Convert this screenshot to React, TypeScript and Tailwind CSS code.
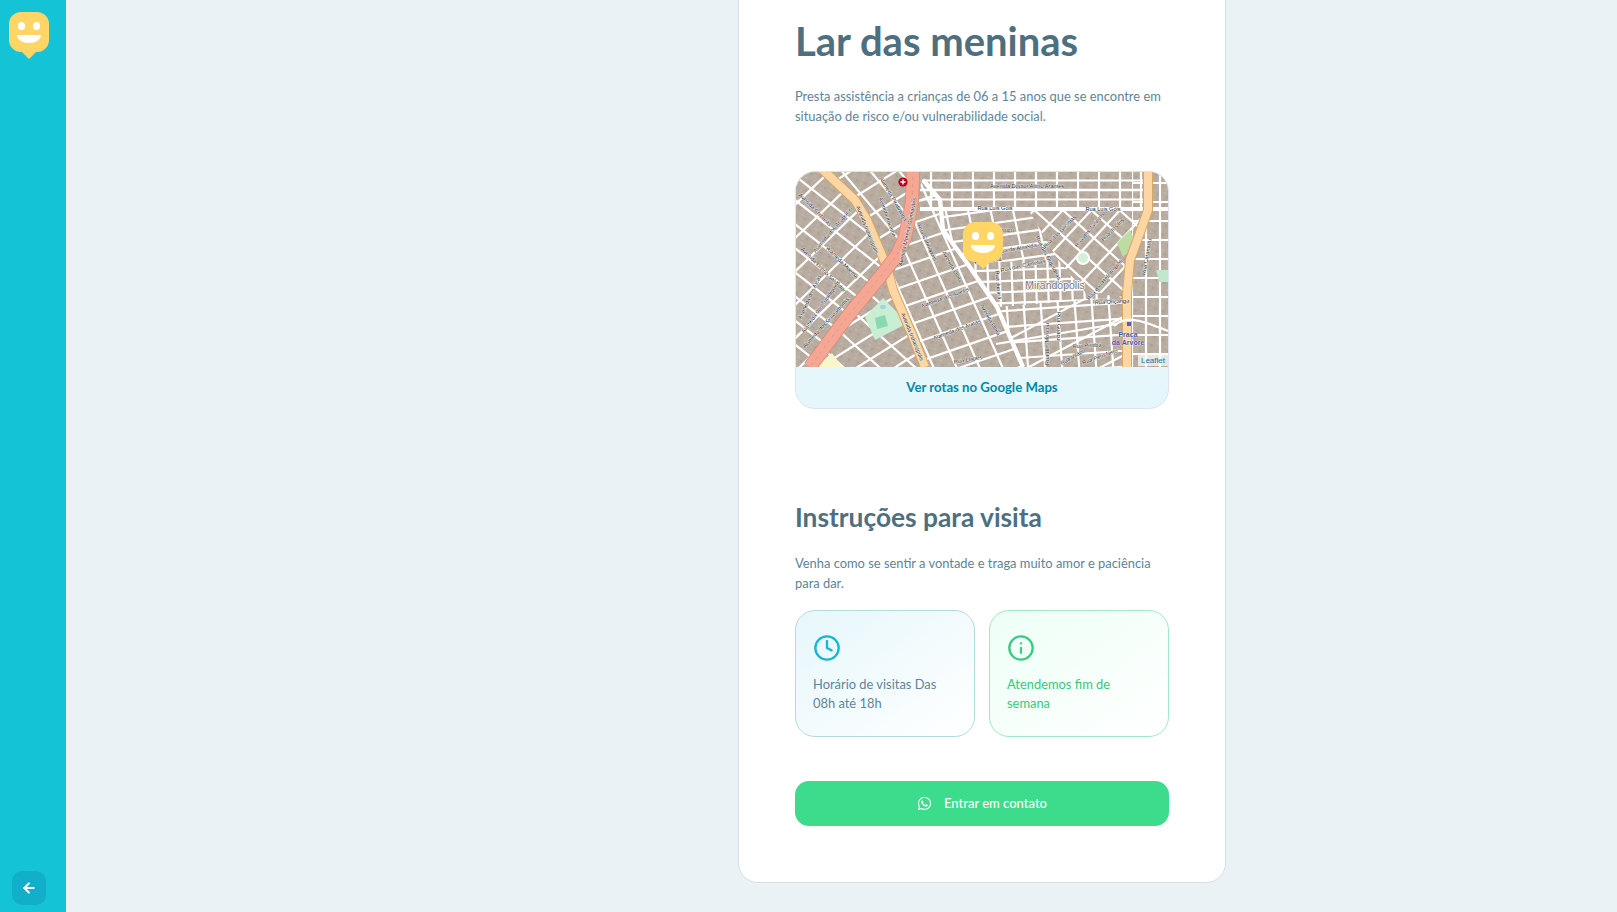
import { ArrowLeft, Clock, Info } from "lucide-react";
import { FaWhatsapp } from "react-icons/fa";

const W = 372;
const H = 195;

function hatch(angle: number, spacing: number, cx = 180, cy = 100) {
  const rad = (angle * Math.PI) / 180;
  const ux = Math.cos(rad);
  const uy = Math.sin(rad);
  let d = "";
  for (let i = -30; i <= 30; i++) {
    const ox = cx - uy * spacing * i;
    const oy = cy + ux * spacing * i;
    d += `M${(ox - ux * 500).toFixed(1)} ${(oy - uy * 500).toFixed(1)}L${(ox + ux * 500).toFixed(1)} ${(oy + uy * 500).toFixed(1)}`;
  }
  return d;
}

const districts = [
  {
    id: "west",
    points: "0,0 27,0 59,28 71,48 91,95 84,105 51,145 14,195 0,195",
    lines: [hatch(-44, 24, 40, 60), hatch(38, 19, 40, 60)],
  },
  {
    id: "mid",
    points: "27,0 117,0 116,31 109,65 101,83 84,105 91,95 71,48 59,28",
    lines: [hatch(-32, 24, 80, 40), hatch(50, 22, 80, 40)],
  },
  {
    id: "center",
    points: "127,8 144,28 147,58 171,91 201,135 227,195 129,195 97,118 101,83 109,65 116,31",
    lines: [hatch(-19, 19, 150, 120), hatch(66, 21, 150, 120)],
  },
  {
    id: "south",
    points: "84,105 97,118 117,165 129,195 14,195 51,145",
    lines: [hatch(-32, 20, 80, 160), hatch(42, 24, 80, 160)],
  },
  {
    id: "north",
    points: "126,0 352,0 352,38 126,38",
    lines: [hatch(0, 9.5, 240, 18), hatch(90, 21, 240, 18)],
  },
  {
    id: "ipu",
    points: "147,37 232,37 262,88 171,91 147,58",
    lines: [hatch(-8, 13, 200, 64), hatch(78, 22, 200, 64)],
  },
  {
    id: "ne",
    points: "232,37 350,37 334,88 331,121 290,121 262,88",
    lines: [hatch(-47, 21, 285, 80), hatch(42, 19, 285, 80)],
  },
  {
    id: "mir",
    points: "171,91 262,88 290,121 331,125 201,135",
    lines: [hatch(-2, 11, 240, 108), hatch(88, 12, 240, 108)],
  },
  {
    id: "sud",
    points: "201,135 331,123 331,195 227,195",
    lines: [hatch(-4, 16, 280, 150), hatch(86, 17, 280, 150), hatch(-28, 34, 280, 170)],
  },
  {
    id: "east",
    points: "336,0 372,0 372,195 336,195",
    lines: [hatch(0, 19, 350, 30), hatch(90, 14, 350, 30)],
  },
];

const labels = [
  { t: "Avenida Doutor Altino Arantes", x: 231, y: 15, r: 0 },
  { t: "Rua Luis Góis", x: 199, y: 37, r: 0 },
  { t: "Rua Luis Góis", x: 307, y: 38, r: 0 },
  { t: "Avenida Indianópolis", x: 71, y: 58, r: 68 },
  { t: "Avenida Moreira Guimarães", x: 112, y: 60, r: -78 },
  { t: "Avenida Chibarás", x: 19, y: 38, r: 45 },
  { t: "Alameda dos Anapurus", x: 37, y: 58, r: -50 },
  { t: "Alameda Moema", x: 46, y: 91, r: 45 },
  { t: "Avenida Divino Salvador", x: 27, y: 98, r: 45 },
  { t: "Avenida Iracema", x: 91, y: 45, r: 70 },
  { t: "Alameda Piratininga", x: 97, y: 27, r: 60 },
  { t: "Rua Carinópolis", x: 131, y: 71, r: 65 },
  { t: "Avenida Odila", x: 156, y: 95, r: 60 },
  { t: "Avenida Odila", x: 194, y: 148, r: 60 },
  { t: "Alameda dos Aicás", x: 14, y: 125, r: -65 },
  { t: "Alameda dos Tupiniquins", x: 25, y: 135, r: -55 },
  { t: "Alameda dos Guaramomis", x: 30, y: 151, r: -48 },
  { t: "Alameda dos Aratás", x: 161, y: 158, r: -20 },
  { t: "Alameda dos Aueitis", x: 149, y: 126, r: -20 },
  { t: "Avenida Indianópolis", x: 116, y: 165, r: 68 },
  { t: "Rua das Camélias", x: 227, y: 94, r: -12 },
  { t: "Rua Itapuã", x: 192, y: 89, r: -8 },
  { t: "Rua de Almeida", x: 221, y: 77, r: -10 },
  { t: "Rua Ipuçu", x: 205, y: 59, r: 0 },
  { t: "Rua das Orquídeas", x: 252, y: 86, r: 62 },
  { t: "Rua das Glicínias", x: 264, y: 60, r: -45 },
  { t: "Rua dos Jacintos", x: 294, y: 58, r: -50 },
  { t: "Rua dos Íris", x: 317, y: 58, r: -45 },
  { t: "Rua dos Heliotrópios", x: 309, y: 108, r: -50 },
  { t: "Rua Oriçanga", x: 316, y: 130, r: -3 },
  { t: "Rua Caramuru", x: 351, y: 85, r: -80 },
  { t: "Rua Jupará", x: 202, y: 113, r: 85 },
  { t: "Rua dos Moscou", x: 252, y: 172, r: -90 },
  { t: "Rua Guaçuí", x: 262, y: 155, r: 90 },
  { t: "Rua Piritiba", x: 291, y: 174, r: -3 },
  { t: "Rua Vitápu", x: 277, y: 185, r: -30 },
  { t: "Rua Pero Neto", x: 304, y: 185, r: -20 },
  { t: "Rua Llapes", x: 172, y: 188, r: -10 },
];

function Logo({ className }: { className: string }) {
  return (
    <svg viewBox="0 0 40 47" className={className}>
      <path
        d="M12 0h16a12 12 0 0 1 12 12v16a12 12 0 0 1-12 12h-1l-7 7-7-7h-1A12 12 0 0 1 0 28V12A12 12 0 0 1 12 0Z"
        fill="#ffd666"
      />
      <rect x="9" y="10" width="7" height="8" rx="3.5" fill="#fff" />
      <rect x="24" y="10" width="7" height="8" rx="3.5" fill="#fff" />
      <path d="M8 23h24c0 4.5-5.5 8-12 8s-12-3.5-12-8Z" fill="#fff" />
    </svg>
  );
}

const indianopolis = "M27 -2L59 28l12 20 20 47 6 23 20 47 12 30";
const moreira = "M117 -2l-1 33-7 34-8 18-17 22-33 40-37 50";
const eastRoad = "M352 -2v40l-6 17-12 33-3 33v74";

function MapDrawing() {
  return (
    <svg viewBox={`0 0 ${W} ${H}`} className="block h-[195px] w-full bg-[#b8ab9f]">
      <defs>
        <pattern id="roofs" width="9" height="9" patternUnits="userSpaceOnUse" patternTransform="rotate(20)">
          <rect x="1" y="1" width="3" height="1.5" fill="#c2b7ac" />
          <rect x="5" y="4" width="2.5" height="2.5" fill="#aea093" />
          <rect x="1.5" y="6" width="1.5" height="1.5" fill="#c2b7ac" />
        </pattern>
        {districts.map((d) => (
          <clipPath key={d.id} id={`clip-${d.id}`}>
            <polygon points={d.points} />
          </clipPath>
        ))}
      </defs>
      <rect width={W} height={H} fill="url(#roofs)" />

      {districts.map((d) => (
        <g key={d.id} clipPath={`url(#clip-${d.id})`} fill="none" stroke="#fff" strokeWidth="2.2">
          {d.lines.map((line, i) => (
            <path key={i} d={line} />
          ))}
        </g>
      ))}

      {/* parks */}
      <path d="M69 145l18-19 25 25-33 17Z" fill="#c8eed4" />
      <path d="M79 146l10-3 3 11-11 3Z" fill="#8bd9b2" />
      <rect x="84" y="133" width="6" height="4" rx="2" fill="#aad3df" />
      <path d="M321 71l13-13 7 15-14 12Z" fill="#bcdca2" />
      <circle cx="287" cy="86" r="6" fill="#d5f0d8" stroke="#fff" strokeWidth="2" />
      <path d="M19 195l17-14 10 14Z" fill="#fbf6c9" />
      <path d="M360 98h12v12h-9Z" fill="#bfe8cf" />

      {/* main roads */}
      <g fill="none" strokeLinecap="butt" strokeLinejoin="round">
        <path d="M127 8l17 20 3 30 24 33 30 44 26 60" stroke="#fff" strokeWidth="4.4" />
        <path d="M124 37H372" stroke="#fff" strokeWidth="3.8" />
        <path d="M124 18H352" stroke="#fff" strokeWidth="2.6" />
        <path d={indianopolis} stroke="#d9a764" strokeWidth="10" />
        <path d={indianopolis} stroke="#fdd6a3" strokeWidth="8" />
        <path d={moreira} stroke="#d98a76" strokeWidth="14" />
        <path d={moreira} stroke="#f5a793" strokeWidth="12.5" />
        <path d={moreira} stroke="#c99585" strokeWidth="0.7" strokeDasharray="3 4" />
        <path d={eastRoad} stroke="#d9a764" strokeWidth="10" />
        <path d={eastRoad} stroke="#fdd6a3" strokeWidth="8" />
        <path d="M318 154c10-10 22-8 54 5" stroke="#fff" strokeWidth="2.4" />
        <path d="M200 172l120-20" stroke="#fff" strokeWidth="2.2" />
      </g>

      {/* hospital */}
      <circle cx="107" cy="10" r="4.6" fill="#b3001e" />
      <path d="M107 7.5v5M104.5 10h5" stroke="#fff" strokeWidth="1.4" />

      <g
        fontFamily="'Liberation Sans', sans-serif"
        fontSize="5.6"
        fill="#222"
        stroke="#fff"
        strokeWidth="0.6"
        paintOrder="stroke"
        textAnchor="middle"
      >
        {labels.map((l, i) => (
          <text key={i} x={l.x} y={l.y} dominantBaseline="middle" transform={`rotate(${l.r} ${l.x} ${l.y})`}>
            {l.t}
          </text>
        ))}
        <text x="259" y="114" fontSize="10.5" fill="#777" strokeWidth="1.4" dominantBaseline="middle">
          Mirandópolis
        </text>
        <rect x="331" y="150" width="4" height="4" fill="#5a5fb5" stroke="none" />
        <text x="332" y="163" fontSize="7" fontWeight="700" fill="#4a50b0" dominantBaseline="middle">
          Praça
        </text>
        <text x="332" y="171" fontSize="7" fontWeight="700" fill="#4a50b0" dominantBaseline="middle">
          da Árvore
        </text>
      </g>
    </svg>
  );
}

function App() {
  return (
    <div className="flex h-screen overflow-hidden bg-[#ebf2f5] font-['Lato','Noto_Sans',sans-serif] text-[#5c8599]">
      <aside className="flex w-[66px] shrink-0 flex-col items-start justify-between bg-[#15c3d6] pt-[12px] pb-[7px] pl-[9px]">
        <Logo className="h-[47px] w-[40px]" />
        <button className="ml-[3px] flex h-[34px] w-[34px] items-center justify-center rounded-[10px] bg-[#12afcb] text-white">
          <ArrowLeft size={16} strokeWidth={3} />
        </button>
      </aside>

      <main className="flex flex-1 items-end pb-[29px] pl-[672px]">
        <section className="w-[488px] shrink-0 rounded-b-[20px] border border-[#d3e2e5] bg-white pt-[40px] pr-[56px] pb-[56px] pl-[56px]">
          <h1 className="h-[54px] text-[40px] leading-[54px] font-bold text-[#4d6f80]">Lar das meninas</h1>
          <p className="mt-[18px] text-[12.9px] leading-[20px]">
            Presta assistência a crianças de 06 a 15 anos que se encontre em situação de risco e/ou vulnerabilidade
            social.
          </p>

          <div className="relative mt-[45px] overflow-hidden rounded-[20px] border border-[#dde3f0] bg-[#e6f7fb]">
            <MapDrawing />
            <Logo className="absolute top-[50px] left-[167px] h-[47px] w-[40px]" />
            <span className="absolute top-[183px] right-0 bg-white/70 px-[3px] font-['Liberation_Sans',sans-serif] text-[8px] leading-[11px] text-[#0078a8]">
              Leaflet
            </span>
            <div className="h-[41px] text-center text-[13.2px] leading-[41px] font-bold text-[#0089a5]">
              Ver rotas no Google Maps
            </div>
          </div>

          <h2 className="mt-[89px] h-[38px] text-[26.3px] leading-[38px] font-bold text-[#4d6f80]">
            Instruções para visita
          </h2>
          <p className="mt-[17px] text-[12.9px] leading-[20px]">
            Venha como se sentir a vontade e traga muito amor e paciência para dar.
          </p>

          <div className="mt-[17px] grid grid-cols-2 gap-[14px]">
            <div className="h-[127px] rounded-[20px] border border-[#b3dae2] bg-gradient-to-br from-[#e6f7fb] to-white px-[17px] pt-[23px] text-[12.9px] leading-[19px]">
              <Clock size={28} strokeWidth={2} className="text-[#15b6d6]" />
              <p className="mt-[13px]">Horário de visitas Das 08h até 18h</p>
            </div>
            <div className="h-[127px] rounded-[20px] border border-[#a1e9c5] bg-gradient-to-br from-[#edfff6] to-white px-[17px] pt-[23px] text-[12.9px] leading-[19px] text-[#37c77f]">
              <Info size={28} strokeWidth={2} className="text-[#39cc83]" />
              <p className="mt-[13px]">Atendemos fim de semana</p>
            </div>
          </div>

          <button className="mt-[44px] flex h-[45px] w-full items-center justify-center gap-[12px] rounded-[14px] bg-[#3cdc8c] text-[13px] font-medium text-white">
            <FaWhatsapp size={15} />
            Entrar em contato
          </button>
        </section>
      </main>
    </div>
  );
}

export default App;
